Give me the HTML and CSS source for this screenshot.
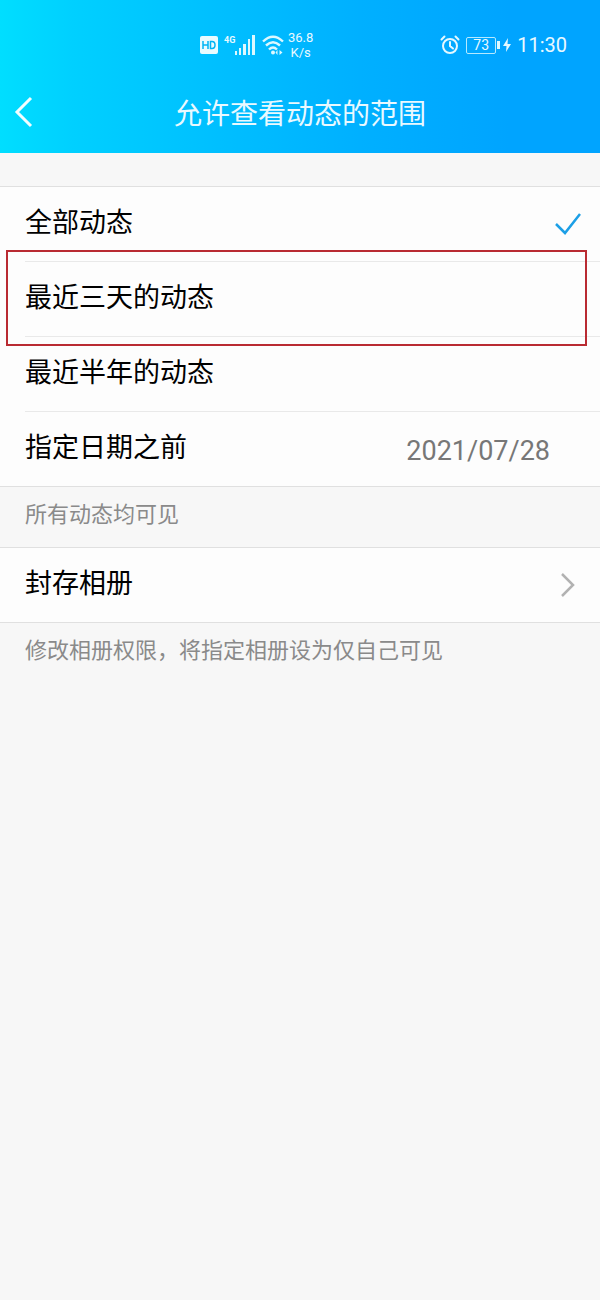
FILE: index.html
```html
<!DOCTYPE html>
<html lang="zh-CN">
<head>
<meta charset="utf-8">
<meta name="viewport" content="width=device-width, initial-scale=1">
<title>允许查看动态的范围</title>
<link rel="stylesheet" href="styles.css">
</head>
<body>
<header class="header">
  <div class="status">
    <div class="status-group">
      <svg class="icon" width="18" height="18" viewBox="0 0 18 18" aria-label="HD"><rect width="18" height="18" rx="2" fill="#e9fbff"/><path d="M3 5v8M8 5v8M3 9h5M10.500 5.500v7h1.500q3 0 3-3.500t-3-3.500z" fill="none" stroke="#00b5f5" stroke-width="1.500"/></svg>
      <div class="signal">
        <span class="network">4G</span>
        <svg class="icon" width="21" height="20" viewBox="0 0 21 20" fill="#dcf8ff" aria-hidden="true"><rect x="0" y="16" width="2" height="4"/><rect x="4" y="13" width="2" height="7"/><rect x="8" y="9" width="3" height="11"/><rect x="13" y="4" width="2" height="16"/><rect x="17" y="0" width="3" height="20"/></svg>
      </div>
      <svg class="icon" width="22" height="20" viewBox="0 0 22 20" aria-hidden="true"><g fill="none" stroke="#dcf8ff" stroke-width="2.400"><path d="M1 6.500Q11-3 21 6.500M4 10.500q7-6.500 14 0M7 14.500q4-4 8 0"/></g><circle cx="11" cy="17.500" r="2" fill="#dcf8ff"/><path d="M13.500 17.500l2-2.500v5zM17.500 15l3 2.500-3 2.500z" fill="#dcf8ff"/></svg>
      <div class="speed"><span>36.8</span><span>K/s</span></div>
    </div>
    <div class="status-group">
      <svg class="icon" width="20" height="20" viewBox="0 0 20 20" fill="none" stroke="#e4f8ff" stroke-width="2" stroke-linecap="round" aria-hidden="true"><circle cx="10" cy="11" r="7"/><path d="M10 7v4l3 2.500M1.500 4.500l3-3M18.500 4.500l-3-3"/></svg>
      <div class="battery"><span class="battery-level">73</span></div>
      <svg class="icon bolt" width="8" height="16" viewBox="0 0 8 16" aria-hidden="true"><path d="M5 1L0 9h3.500L3 15l5-8H4.500z" fill="#e4f8ff"/></svg>
      <time class="clock">11:30</time>
    </div>
  </div>
  <nav class="titlebar">
    <button class="back" type="button" aria-label="返回"><svg width="20" height="32" viewBox="0 0 20 32" aria-hidden="true"><path d="M17 2L3 16l14 14" fill="none" stroke="#f2fdff" stroke-width="3"/></svg></button>
    <h1 class="title">允许查看动态的范围</h1>
  </nav>
</header>
<main class="content">
  <form class="group" aria-label="允许查看动态的范围">
    <label class="row"><span class="label">全部动态</span><input class="choice" type="radio" name="range" checked>
      <svg class="check" width="28" height="24" viewBox="0 0 28 24" aria-hidden="true"><path d="M2 12l9 9L26 2" fill="none" stroke="#1c9fe6" stroke-width="2.500"/></svg></label>
    <label class="row marked"><span class="label">最近三天的动态</span><input class="choice" type="radio" name="range"></label>
    <label class="row"><span class="label">最近半年的动态</span><input class="choice" type="radio" name="range"></label>
    <label class="row"><span class="label">指定日期之前</span><input class="choice" type="radio" name="range"><time class="date">2021/07/28</time></label>
  </form>
  <p class="note">所有动态均可见</p>
  <div class="group">
    <a class="row" href="#albums"><span class="label">封存相册</span>
      <svg class="chevron" width="16" height="26" viewBox="0 0 16 26" aria-hidden="true"><path d="M2 2l11 11L2 24" fill="none" stroke="#b2b2b2" stroke-width="2.500"/></svg></a>
  </div>
  <p class="note">修改相册权限，将指定相册设为仅自己可见</p>
</main>
</body>
</html>
```
FILE: styles.css
```css
* {
  box-sizing: border-box;
}

body {
  margin: 0;
  min-height: 100vh;
  background: #f7f7f7;
  color: #000;
  font-family: Roboto, "Noto Sans CJK SC", sans-serif;
}

.header {
  padding-top: 24px;
  background: linear-gradient(90deg, #00deff 0%, #00d0ff 12%, #00c0ff 35%, #00b0ff 60%, #00a4ff 85%);
  color: #e9f9ff;
}

.status {
  display: flex;
  justify-content: space-between;
  align-items: center;
  height: 42px;
  padding: 0 33px 0 200px;
}

.status-group {
  display: flex;
  align-items: center;
  gap: 6px;
}

.icon {
  display: block;
  flex: none;
}

.signal {
  display: flex;
  align-items: flex-end;
}

.network {
  align-self: flex-start;
  width: 11px;
  font-size: 9px;
  font-weight: 700;
  line-height: 10px;
}

.speed {
  display: flex;
  flex-direction: column;
  align-items: center;
  margin-left: -2px;
  font-size: 13px;
  line-height: 15px;
}

.battery {
  display: flex;
  align-items: center;
}

.battery::after {
  content: "";
  width: 3px;
  height: 8px;
  margin-left: 1px;
  background: #dcf8ff;
}

.battery-level {
  width: 30px;
  border: 1px solid #b5e9ff;
  border-radius: 2px;
  font-size: 14px;
  line-height: 15px;
  text-align: center;
}

.bolt {
  margin-left: -3px;
}

.clock {
  font-size: 20px;
  line-height: 24px;
}

.titlebar {
  display: grid;
  grid-template-columns: 48px 1fr 48px;
  align-items: center;
  height: 87px;
}

.back {
  display: flex;
  justify-content: center;
  padding: 4px 0 0;
  border: 0;
  background: none;
}

.title {
  margin: 0;
  padding-top: 10px;
  font-size: 28px;
  font-weight: 400;
  line-height: 40px;
  text-align: center;
}

.content {
  padding-top: 33px;
}

.group {
  border-top: 1px solid #e0e0e0;
  border-bottom: 1px solid #e0e0e0;
  background: #fdfdfd;
}

.row {
  position: relative;
  display: flex;
  align-items: center;
  height: 74px;
  padding-left: 25px;
  color: inherit;
  text-decoration: none;
}

.row + .row {
  height: 75px;
}

.row + .row::before {
  content: "";
  position: absolute;
  top: 0;
  left: 25px;
  right: 0;
  border-top: 1px solid #e9e9e9;
}

.label {
  flex: 1;
  padding-bottom: 2px;
  font-size: 27px;
  line-height: 40px;
}

.choice {
  appearance: none;
  width: 0;
  height: 0;
  margin: 0;
}

.marked::after {
  content: "";
  position: absolute;
  z-index: 1;
  inset: -11px 13px -10px 6px;
  border: 2px solid #b92b32;
}

.check {
  margin-right: 18px;
}

.date {
  margin-right: 50px;
  padding-top: 4px;
  color: #777;
  font-size: 27px;
  line-height: 32px;
}

.chevron {
  margin-right: 24px;
}

.note {
  margin: 0;
  padding: 12px 25px 16px;
  color: #8a8a8a;
  font-size: 22px;
  line-height: 32px;
}
```
